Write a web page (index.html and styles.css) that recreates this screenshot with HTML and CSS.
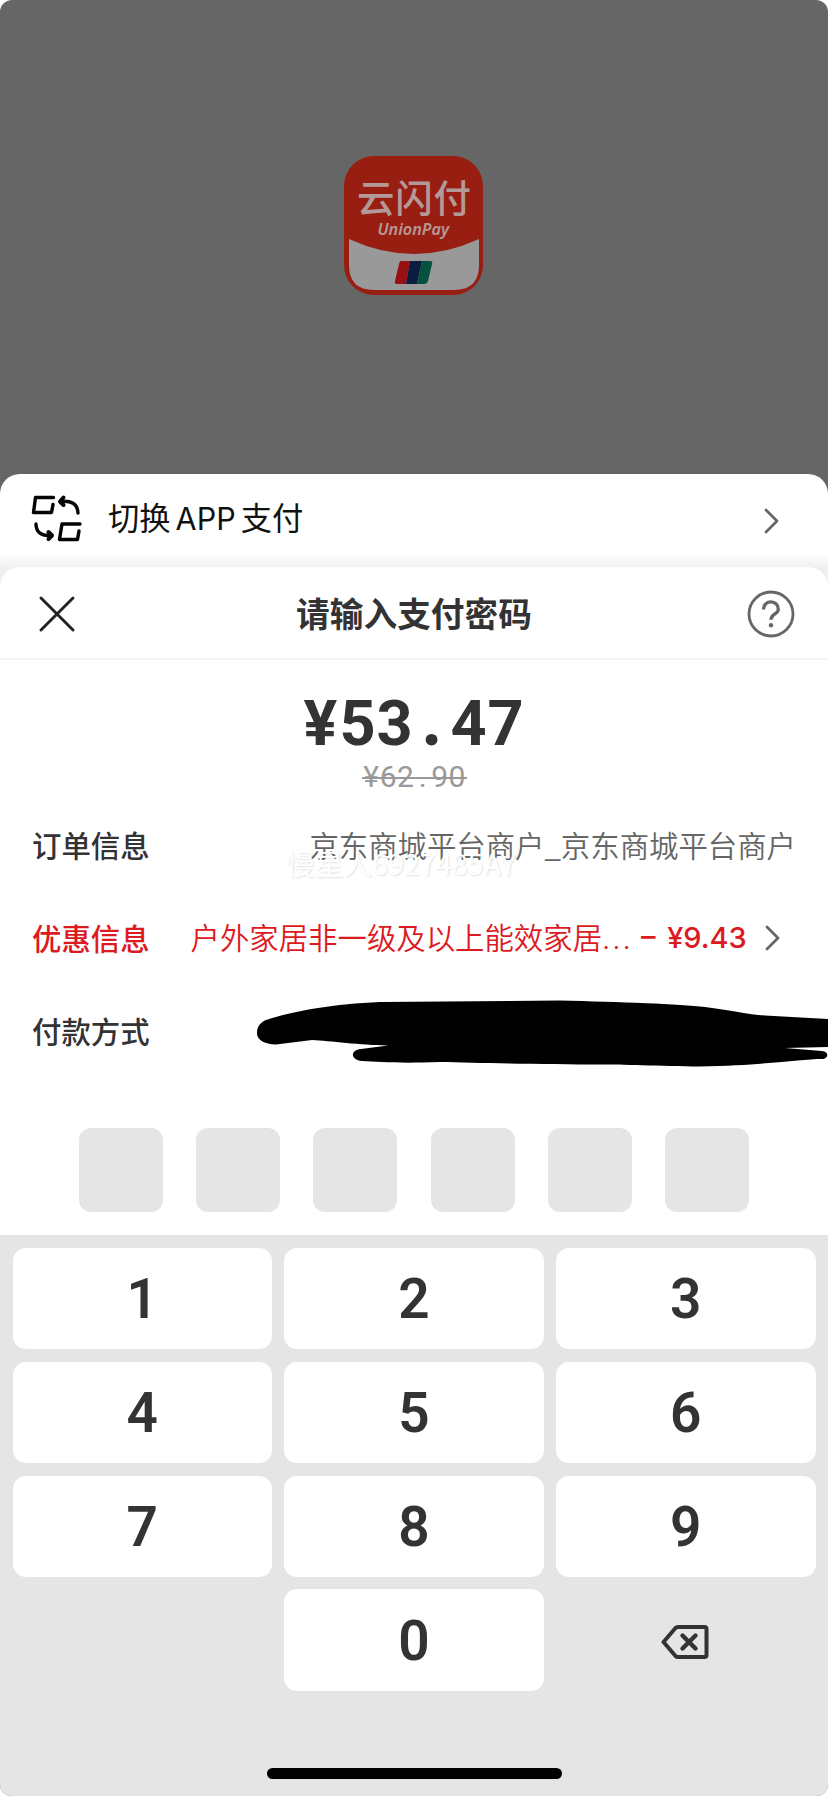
FILE: index.html
```html
<!DOCTYPE html>
<html lang="zh-CN">
<head>
<meta charset="utf-8">
<title>云闪付</title>
<link rel="stylesheet" href="styles.css">
</head>
<body>
<main class="screen">
  <header class="hero">
    <svg class="logo" width="140" height="140" viewBox="0 0 140 140">
      <rect x="0" y="0" width="139" height="139" rx="30" fill="#991e12"/>
      <path d="M5 83Q70 113 135 83V109Q135 134 110 134H30Q5 134 5 109Z" fill="#999"/>
      <text class="logo-cn" x="13" y="56" textLength="114">云闪付</text>
      <text class="logo-en" x="33.5" y="79" textLength="71.5" lengthAdjust="spacingAndGlyphs">UnionPay</text>
      <path d="M57 105H66L62 128H53Q50 128 51 125L55 108Q55.500 105 57 105Z" fill="#991014"/>
      <path d="M66 105H78L73 128H62Z" fill="#0b1c40"/>
      <path d="M78 105H86Q89 105 88 108L84 125Q83 128 80 128H73Z" fill="#05503f"/>
    </svg>
  </header>

  <section class="switch">
    <svg class="switch-icon" width="52" height="50" viewBox="0 0 52 50" fill="none" stroke="#050505" stroke-width="3.400" stroke-linecap="round" stroke-linejoin="round">
      <path d="M23.500 4.500H5.500L3.500 19.500H21.500L23 11.500"/>
      <path d="M31 8.500C41 7.500 47.500 10.500 48 20"/>
      <path d="M33.500 4.500L30 8.500L33.500 12" stroke-width="4"/>
      <path d="M6 31C6 39 11 43 20 42.500"/>
      <path d="M18.500 39L22 42.500L18.500 46" stroke-width="4"/>
      <path d="M50 31H32L29.500 46.500H47.500L49 38"/>
    </svg>
    <span class="switch-label">切换 <span class="latin">APP</span> 支付</span>
    <svg class="chevron" width="16" height="26" viewBox="0 0 16 26"><path d="M2 2L13 13L2 24"/></svg>
  </section>

  <section class="sheet">
    <div class="sheet-head">
      <svg width="36" height="36" viewBox="0 0 36 36" fill="none" stroke="#222" stroke-width="2.900" stroke-linecap="round"><path d="M2 2L34 34M34 2L2 34"/></svg>
      <h1 class="title">请输入支付密码</h1>
      <svg width="48" height="48" viewBox="0 0 48 48" fill="none" stroke="#666" stroke-width="2.800" stroke-linecap="butt">
        <circle cx="24" cy="24" r="22"/>
        <path d="M16.500 19.500C16.500 9 31.500 9.500 31.300 19.500C31.200 24.500 24 23.500 24 29.800" stroke-width="3.300"/>
        <circle cx="24" cy="35.300" r="2.200" fill="#666" stroke="none"/>
      </svg>
    </div>

    <div class="amount"><span>¥</span><span>5</span><span>3</span><span class="dot">.</span><span>4</span><span>7</span></div>
    <div class="original"><span>¥</span><span>6</span><span>2</span><span>.</span><span>9</span><span>0</span></div>

    <div class="rows">
      <div class="row">
        <span class="label">订单信息</span>
        <span class="value">京东商城平台商户_京东商城平台商户</span>
        <span class="watermark">慢星人6927485AY</span>
      </div>
      <div class="row promo">
        <span class="label">优惠信息</span>
        <span class="promo-name">户外家居非一级及以上能效家居<span class="dots">...</span></span>
        <span class="promo-off">– ¥9.43</span>
        <svg class="chevron" width="16" height="26" viewBox="0 0 16 26"><path d="M2 2L13 13L2 24"/></svg>
      </div>
      <div class="row">
        <span class="label">付款方式</span>
        <svg class="scribble" width="572" height="68" viewBox="256 999 572 68">
          <path d="M257 1033C257 1026 261 1022 266 1020C290 1012 330 1004 380 1002L560 1000.500C620 1002 680 1004 705 1007C730 1010 750 1015 765 1015.500L828 1019V1047L785 1048L822 1051C830 1052 828 1059 822 1059C800 1059 770 1065 700 1066.500C660 1066 620 1064.500 600 1064.500C550 1064.500 480 1063 440 1062C400 1063.500 380 1062 362 1061C350 1060 350 1050 361 1049L388 1045.500C360 1045 330 1041 312 1040L276 1044.500C264 1044 257 1040 257 1033Z"/>
        </svg>
      </div>
    </div>

    <div class="pin"><i></i><i></i><i></i><i></i><i></i><i></i></div>
  </section>

  <section class="keypad">
    <div class="keys">
      <button class="key">1</button><button class="key">2</button><button class="key">3</button>
      <button class="key">4</button><button class="key">5</button><button class="key">6</button>
      <button class="key">7</button><button class="key">8</button><button class="key">9</button>
      <span></span><button class="key">0</button>
      <button class="key erase">
        <svg width="48" height="34" viewBox="0 0 48 34" fill="none" stroke="#333" stroke-width="4" stroke-linecap="round" stroke-linejoin="round">
          <path d="M17 2H43.500Q45.500 2 45.500 4V30Q45.500 32 43.500 32H17Q15.500 32 14.500 31L2.500 17L14.500 3Q15.500 2 17 2Z"/>
          <path d="M21.500 10.500L34.500 23.500M34.500 10.500L21.500 23.500" stroke-width="4.400"/>
        </svg>
      </button>
    </div>
    <div class="home-bar"></div>
  </section>
</main>
</body>
</html>
```

FILE: styles.css
```css
* {
  box-sizing: border-box;
}

body {
  margin: 0;
  background: #fff;
  font-family: "Noto Sans CJK SC", sans-serif;
  color: #333;
}

.screen {
  display: flex;
  flex-direction: column;
  width: 828px;
  height: 1796px;
  overflow: hidden;
  border-radius: 12px;
  background: #666;
}

.hero {
  height: 474px;
  padding-top: 156px;
  display: flex;
  justify-content: center;
  align-items: flex-start;
}

.logo {
  display: block;
}

.logo-cn {
  font-family: "Noto Sans CJK SC", sans-serif;
  font-size: 37.500px;
  font-weight: 500;
  fill: #b39a98;
}

.logo-en {
  font-family: "Noto Sans", sans-serif;
  font-size: 16.500px;
  font-weight: 600;
  font-style: italic;
  fill: #b39a98;
}

.switch {
  display: flex;
  align-items: center;
  height: 118px;
  margin-bottom: -25px;
  padding: 0 48px 25px 30px;
  border-radius: 20px 20px 0 0;
  background: linear-gradient(#fff 78px, #f0f0f0 94px, #ececec);
}

.switch-icon {
  margin-top: -5px;
}

.switch-label {
  flex: 1;
  margin: -6px 0 0 26px;
  font-size: 31.300px;
  line-height: 44px;
  color: #111;
  white-space: pre;
}

.latin {
  font-family: Inter, sans-serif;
  font-size: 30.500px;
  margin: 0 -2px;
}

.chevron {
  flex: none;
  fill: none;
  stroke: #666;
  stroke-width: 2.800;
  stroke-linecap: round;
  stroke-linejoin: round;
}

.sheet {
  height: 668px;
  border-radius: 20px 20px 0 0;
  background: #fff;
}

.sheet-head {
  display: flex;
  align-items: center;
  justify-content: space-between;
  height: 93px;
  padding: 2px 33px 0 39px;
  border-bottom: 2px solid #f5f5f5;
}

.title {
  margin: -2px 0 0 6px;
  font-size: 33.700px;
  line-height: 50px;
  font-weight: 700;
}

.amount {
  height: 76px;
  margin-top: 26px;
  padding-right: 2px;
  font: 700 63px/76px Roboto, sans-serif;
  text-align: center;
}

.amount span {
  display: inline-block;
  width: 37px;
  text-align: center;
}

.amount .dot {
  font-family: Lato, sans-serif;
  font-size: 72px;
  font-weight: 900;
  line-height: 60px;
}

.original {
  position: relative;
  display: flex;
  width: 103px;
  height: 36px;
  margin: -3px auto 0;
  font: 400 30px/36px Roboto, sans-serif;
  color: #999;
}

.original::after {
  content: "";
  position: absolute;
  left: -1px;
  right: -1px;
  top: 18px;
  height: 2px;
  background: #999;
}

.original span {
  width: 17.200px;
  display: flex;
  justify-content: center;
}

.rows {
  margin-top: 4px;
}

.row {
  position: relative;
  display: flex;
  align-items: center;
  height: 92.700px;
  padding: 0 32px;
  font-size: 29.400px;
  line-height: 44px;
  white-space: nowrap;
}

.label,
.value,
.promo-name {
  margin-top: -2px;
}

.label {
  font-weight: 500;
}

.value {
  margin-left: auto;
  color: #666;
  font-weight: 350;
}

.watermark {
  position: absolute;
  left: 286px;
  top: 44px;
  font-size: 28.700px;
  line-height: 40px;
  font-weight: 400;
  color: #fff;
  text-shadow: 1px 1px 2px rgba(0, 0, 0, 0.12);
}

.promo {
  padding-right: 47px;
  color: #dc1a22;
}

.promo-name {
  margin-left: 41px;
  font-weight: 350;
}

.dots {
  font-family: Inter, sans-serif;
  letter-spacing: 2px;
}

.promo-off {
  margin: 0 auto 0 8px;
  font-family: Inter, sans-serif;
  font-size: 29px;
  font-weight: 500;
  word-spacing: 4px;
}

.scribble {
  position: absolute;
  left: 256px;
  top: 15px;
  fill: #000;
}

.pin {
  display: flex;
  justify-content: space-between;
  margin-top: 51px;
  padding: 0 79px;
}

.pin i {
  width: 84px;
  height: 84px;
  border-radius: 12px;
  background: #e5e5e5;
}

.keypad {
  display: flex;
  flex-direction: column;
  height: 561px;
  padding: 13px 12.500px 17px;
  background: #e5e5e5;
}

.keys {
  display: grid;
  grid-template-columns: repeat(3, 1fr);
  grid-auto-rows: 101.400px;
  gap: 12.400px;
}

.key {
  display: flex;
  align-items: center;
  justify-content: center;
  padding: 1px 0 0;
  border: 0;
  border-radius: 13px;
  background: #fff;
  color: #333;
  font: 600 55px/60px Roboto, sans-serif;
}

.erase {
  padding: 4px 2px 0 0;
  background: none;
}

.home-bar {
  width: 295px;
  height: 11px;
  margin: auto auto 0;
  border-radius: 6px;
  background: #000;
}
```
